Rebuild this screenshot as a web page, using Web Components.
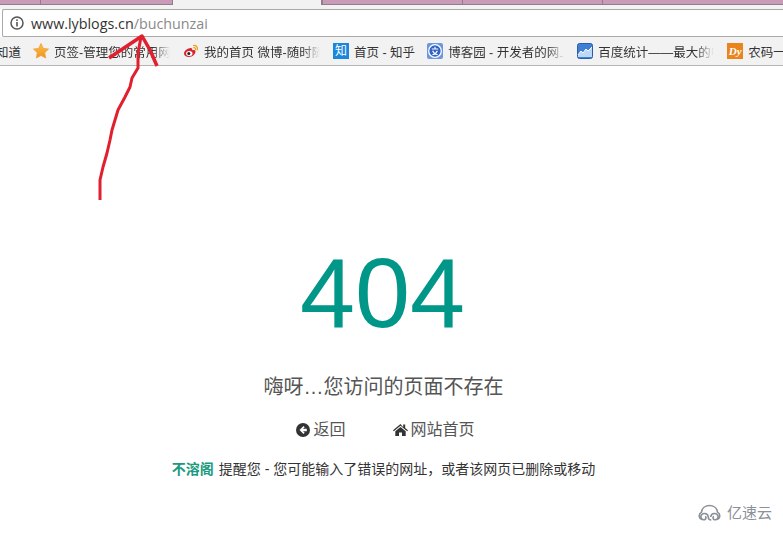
<!DOCTYPE html>
<html lang="zh">
<head>
<meta charset="utf-8">
<title>404</title>
<style>
    html, body { margin: 0; height: 100%; background: #fff; overflow: hidden; }
    body { font-family: "Liberation Sans", "Noto Sans CJK SC", sans-serif; }
</style>
</head>
<body>
<browser-shot>
    <browser-chrome>
        <book-mark class="first"><svg slot="icon" width="0" height="16"></svg>知道</book-mark>
        <book-mark fade>
            <svg slot="icon" width="16" height="16" viewBox="0 0 16 16"><defs><linearGradient id="s" x2="0" y2="1"><stop offset="0" stop-color="#fbc04a"/><stop offset="1" stop-color="#ee9420"/></linearGradient></defs><path d="M8 .5l2.300 4.900 5.200.7-3.800 3.600 1 5.300L8 12.400 3.300 15l1-5.300L.5 6.100l5.200-.7z" fill="url(#s)" stroke="#f0a030" stroke-width=".8" stroke-linejoin="round"/></svg>
            页签-管理您的常用网
        </book-mark>
        <book-mark fade>
            <svg slot="icon" width="16" height="16" viewBox="0 0 16 16"><path d="M1 10.500C1 7.800 5 5 7.600 5c1.700 0 2 1.300 1.600 2.300 1.900-.6 3.300-.2 3.300 1.300C12.500 11.200 9.500 14 6 14c-2.800 0-5-1.300-5-3.500z" fill="#d9232e"/><ellipse cx="6.300" cy="10.500" rx="3.200" ry="2.500" fill="#fff"/><circle cx="5.800" cy="10.600" r="1.500" fill="#222"/><path d="M10.500 2.500c2.500-.4 4.500 1.700 3.800 4.300M10.800 4.700c1.200-.2 2.100.8 1.800 2" fill="none" stroke="#f39c12" stroke-width="1.200" stroke-linecap="round"/></svg>
            我的首页 微博-随时随
        </book-mark>
        <book-mark class="short">
            <fav-icon slot="icon" glyph="知"></fav-icon>
            首页 - 知乎
        </book-mark>
        <book-mark fade>
            <svg slot="icon" width="16" height="16" viewBox="0 0 16 16"><rect width="16" height="16" rx="2" fill="#6d96e0"/><circle cx="8" cy="8" r="6.300" fill="#2f62c4" stroke="#fff" stroke-width="1.300"/><path d="M4.800 6h6.400M8 3.800V6M5.600 7.800c.8 2 2.800 3.500 5 4M10.400 7.800c-.8 2-2.800 3.500-5 4" fill="none" stroke="#fff" stroke-width="1.100"/></svg>
            博客园 - 开发者的网上
        </book-mark>
        <book-mark fade>
            <svg slot="icon" width="16" height="16" viewBox="0 0 16 16"><rect x=".5" y=".5" width="15" height="15" rx="2" fill="#3f7fd6" stroke="#2a5ea8"/><path d="M1 12l3-4 2 2 3-4 2 2 4-4v10H1z" fill="#bcd8f7"/><path d="M1 12l3-4 2 2 3-4 2 2 4-4" fill="none" stroke="#fff"/></svg>
            百度统计——最大的中
        </book-mark>
        <book-mark>
            <fav-icon slot="icon" glyph="Dy" kind="dy"></fav-icon>
            农码一
        </book-mark>
    </browser-chrome>
    <error-page code="404" message="嗨呀…您访问的页面不存在">
        <nav-link icon="back">返回</nav-link>
        <nav-link icon="home">网站首页</nav-link>
        <b slot="brand">不溶阁</b>
        <span slot="note">提醒您 - 您可能输入了错误的网址，或者该网页已删除或移动</span>
    </error-page>
    <red-arrow></red-arrow>
    <yisu-mark>亿速云</yisu-mark>
</browser-shot>

<script>
function define(name, css, html) {
    customElements.define(name, class extends HTMLElement {
        constructor() {
            super();
            this.attachShadow({ mode: 'open' });
        }
        connectedCallback() {
            this.shadowRoot.innerHTML = `<style>${css}</style>${typeof html === 'function' ? html(this) : html}`;
        }
    });
}

define('browser-shot', `
    :host { display: flex; flex-direction: column; position: relative; width: 783px; height: 535px; overflow: hidden; }
`, `<slot></slot>`);

define('browser-chrome', `
    :host { display: block; flex: none; color: #333; }
    .tabs { display: flex; height: 4px; background: #c99bb8; border-bottom: 1px solid #8f7f8a; padding-left: 40px; }
    .tab { flex: none; width: 140px; box-sizing: border-box; border-left: 1px solid #8f7f8a; }
    .tab.small { width: 132px; }
    .tab.on { width: 150px; background: #f2f2f2; margin-bottom: -1px; border-right: 1px solid #8f7f8a; }
    .strip { height: 4px; background: #f2f2f2; }
    .omni { display: flex; align-items: center; gap: 7px; height: 26px; margin: 0 0 0 2px; padding-left: 7px; background: #fff; border: 1px solid #a9a9a9; border-right: 0; border-radius: 2px 0 0 2px; font: 14.300px "Open Sans", sans-serif; }
    .omni svg { flex: none; }
    .host { color: #333; }
    .path { color: #8a8a8a; }
    .bar { display: flex; align-items: center; gap: 13px; height: 28px; background: #f2f2f2; border-bottom: 1px solid #b5b5b5; overflow: hidden; white-space: nowrap; }
    ::slotted(.first) { margin-left: -9px; margin-right: -1px; }
    ::slotted(.short) { margin-right: -1px; }
`, `
    <div class="tabs">
        <div class="tab small"></div><div class="tab on"></div><div class="tab"></div><div class="tab"></div><div class="tab"></div>
    </div>
    <div class="strip"></div>
    <div class="omni">
        <svg width="14" height="14" viewBox="0 0 14 14"><circle cx="7" cy="7" r="6" fill="none" stroke="#555" stroke-width="1.500"/><rect x="6.200" y="6" width="1.600" height="4.500" fill="#555"/><rect x="6.200" y="3.400" width="1.600" height="1.600" fill="#555"/></svg>
        <span><span class="host">www.lyblogs.cn</span><span class="path">/buchunzai</span></span>
    </div>
    <div class="bar"><slot></slot></div>
`);

define('book-mark', `
    :host { display: flex; align-items: center; gap: 5px; flex: none; font-size: 12.500px; color: #333; }
    :host([fade]) .label { width: 116px; overflow: hidden; -webkit-mask-image: linear-gradient(90deg, #000 85%, transparent); mask-image: linear-gradient(90deg, #000 85%, transparent); }
    ::slotted(svg) { display: block; flex: none; }
`, `<slot name="icon"></slot><span class="label"><slot></slot></span>`);

define('fav-icon', `
    :host { display: block; flex: none; width: 16px; height: 16px; background: #1a86dc; color: #fff; font-size: 12px; line-height: 16px; text-align: center; overflow: hidden; }
    :host([kind="dy"]) { background: #e9851c; font: italic bold 11px/16px "Liberation Serif", serif; }
`, host => host.getAttribute('glyph'));

define('error-page', `
    :host { display: flex; flex-direction: column; align-items: center; flex: 1; padding: 169px 16px 0 0; color: #555; }
    h1 { margin: 0 2px 0 0; font: 400 99px/115px "Liberation Sans", sans-serif; color: #009688; }
    h2 { margin: 23px 0 0; font-weight: 400; font-size: 20px; line-height: 28px; color: #555; }
    .links { display: flex; gap: 47px; margin: 17px 0 0 4px; }
    p { margin: 17px 0 0; font-size: 14px; line-height: 20px; color: #333; }
    ::slotted(b) { color: #1a9a80; }
    .brand { margin-right: 5px; }
`, host => `
    <h1>${host.getAttribute('code')}</h1>
    <h2>${host.getAttribute('message')}</h2>
    <div class="links"><slot></slot></div>
    <p><span class="brand"><slot name="brand"></slot></span><slot name="note"></slot></p>
`);

define('nav-link', `
    :host { display: flex; align-items: center; gap: 3px; font-size: 16px; line-height: 24px; color: #555; }
    svg { display: block; flex: none; }
`, host => host.getAttribute('icon') === 'back'
    ? `<svg width="14" height="14" viewBox="0 0 14 14"><circle cx="7" cy="7" r="7" fill="#333"/><path d="M7.500 3L3.500 7l4 4 1.200-1.200L7 8.200h3.800V5.800H7l1.700-1.600z" fill="#fff"/></svg><slot></slot>`
    : `<svg width="15" height="14" viewBox="0 0 15 14"><path d="M7.500 1L0 7.200l.8 1L7.500 2.700l6.700 5.500.8-1-2.800-2.300V1.500h-2v2.700z" fill="#333"/><path d="M7.500 3.900L2.300 8.200V13h3.700V9.600h3V13h3.700V8.200z" fill="#333"/></svg><slot></slot>`);

define('red-arrow', `
    :host { position: absolute; left: 0; top: 0; pointer-events: none; }
    svg { display: block; }
`, `
    <svg width="783" height="535" viewBox="0 0 783 535" fill="none" stroke="#e1202f" stroke-width="3" stroke-linejoin="round">
        <path d="M100 200L100 180L103 167L107 153L110 140L112 130L118 110L125 97L130 87L132 78L138 68L138 53L141 37"/>
        <path d="M109 58L124 48L142 36L150 50L157 66" stroke-width="3.500"/>
    </svg>
`);

define('yisu-mark', `
    :host { position: absolute; right: 11px; top: 503px; display: flex; align-items: center; gap: 5px; font-size: 15px; line-height: 20px; color: #8b9099; }
    svg { display: block; }
`, `
    <svg width="25" height="18" viewBox="0 0 25 18" fill="none" stroke="#8b9099" stroke-width="1.600"><path d="M5 15.500a4 4 0 0 1-.5-7.400C5 4 8.500 1.500 12.500 1.500S20 4 20.500 8.100a4 4 0 0 1-.5 7.400"/><path d="M8 12.500a1 1 0 0 1 1 1 2.300 2.300 0 0 1-2.300 2.300A3.300 3.300 0 0 1 3.800 12.500 3.800 3.800 0 0 1 11.300 13c0 1.300.8 3 3 3"/><path d="M17 12.500a1 1 0 0 0-1 1 2.300 2.300 0 0 0 2.300 2.300 3.300 3.300 0 0 0 2.900-3.300A3.800 3.800 0 0 0 13.700 13"/></svg>
    <slot></slot>
`);
</script>
</body>
</html>
